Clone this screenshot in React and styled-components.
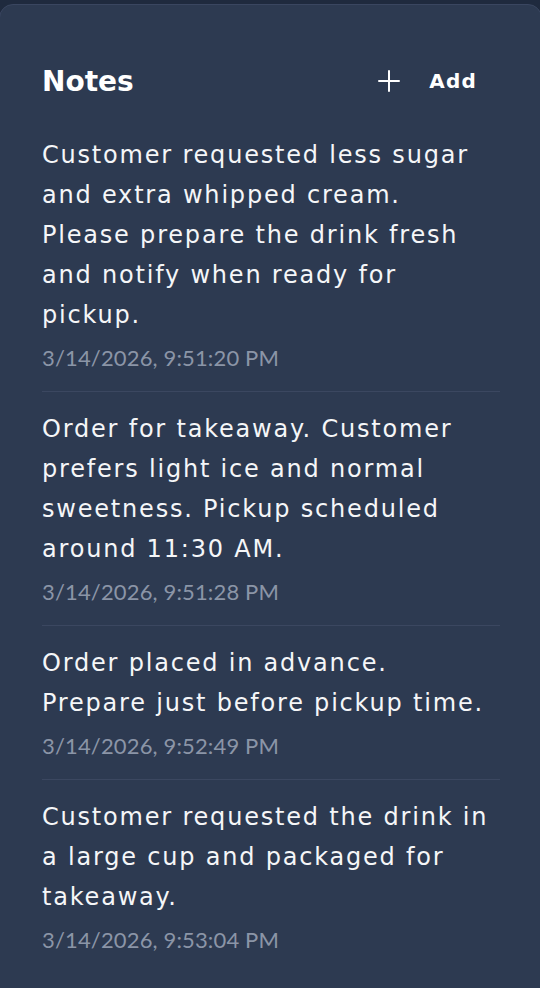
import React from 'react'
import styled, { createGlobalStyle } from 'styled-components'

const GlobalStyle = createGlobalStyle`
  html, body {
    margin: 0;
    padding: 0;
    background: #1f2a3e;
  }
  body {
    font-family: "DejaVu Sans", "Noto Sans", sans-serif;
  }
`

const notes = [
  {
    text: 'Customer requested less sugar and extra whipped cream. Please prepare the drink fresh and notify when ready for pickup.',
    time: '3/14/2026, 9:51:20 PM',
  },
  {
    text: 'Order for takeaway. Customer prefers light ice and normal sweetness. Pickup scheduled around 11:30 AM.',
    time: '3/14/2026, 9:51:28 PM',
  },
  {
    text: 'Order placed in advance. Prepare just before pickup time.',
    time: '3/14/2026, 9:52:49 PM',
  },
  {
    text: 'Customer requested the drink in a large cup and packaged for takeaway.',
    time: '3/14/2026, 9:53:04 PM',
  },
]

const PlusIcon = () => (
  <svg width="22" height="22" viewBox="0 0 22 22" fill="none" stroke="currentColor" strokeWidth="2" strokeLinecap="round">
    <path d="M11 1v20M1 11h20" />
  </svg>
)

const App = () => {
  return (
    <>
      <GlobalStyle />
      <Page>
        <Card>
          <Header>
            <Title>Notes</Title>
            <AddButton type="button">
              <PlusIcon />
              <span>Add</span>
            </AddButton>
          </Header>
          <List>
            {notes.map((note, i) => (
              <Note key={i} $last={i === notes.length - 1}>
                <NoteText>{note.text}</NoteText>
                <Time>{note.time}</Time>
              </Note>
            ))}
          </List>
        </Card>
      </Page>
    </>
  )
}

export default App

const Page = styled.div`
  width: 540px;
  height: 988px;
  padding-top: 4px;
  box-sizing: border-box;
  overflow: hidden;
`

const Card = styled.section`
  height: 1000px;
  margin: 0 -2px 0 -1px;
  padding: 56px 41px 0 42px;
  background: #2d3a51;
  border: 1px solid #3a4660;
  border-radius: 14px;
  box-sizing: border-box;
`

const Header = styled.div`
  height: 40px;
  display: flex;
  align-items: center;
  justify-content: space-between;
  margin-bottom: 17px;
`

const Title = styled.h2`
  margin: 0;
  font-family: "DejaVu Sans", sans-serif;
  font-size: 28px;
  font-weight: 700;
  color: #ffffff;
`

const AddButton = styled.button`
  display: flex;
  align-items: center;
  gap: 29px;
  padding: 0 23px 0 0;
  background: none;
  border: none;
  color: #ffffff;
  font-family: "DejaVu Sans", sans-serif;
  font-size: 20px;
  font-weight: 700;
  letter-spacing: 1.2px;
  cursor: pointer;

  svg {
    width: 22px;
    height: 22px;
  }
`

const List = styled.div`
  display: flex;
  flex-direction: column;
`

const Note = styled.div`
  padding: 17px 0 18px;
  border-bottom: ${p => (p.$last ? 'none' : '1px solid #3b4760')};
`

const NoteText = styled.p`
  margin: 0;
  max-width: 452px;
  font-family: "DejaVu Sans", sans-serif;
  font-size: 24px;
  line-height: 40px;
  letter-spacing: 1.8px;
  color: #f5f6f8;
`

const Time = styled.div`
  margin-top: 8px;
  font-family: "Lato", sans-serif;
  font-size: 22px;
  line-height: 30px;
  letter-spacing: 0.15px;
  color: #8b95a7;
`
